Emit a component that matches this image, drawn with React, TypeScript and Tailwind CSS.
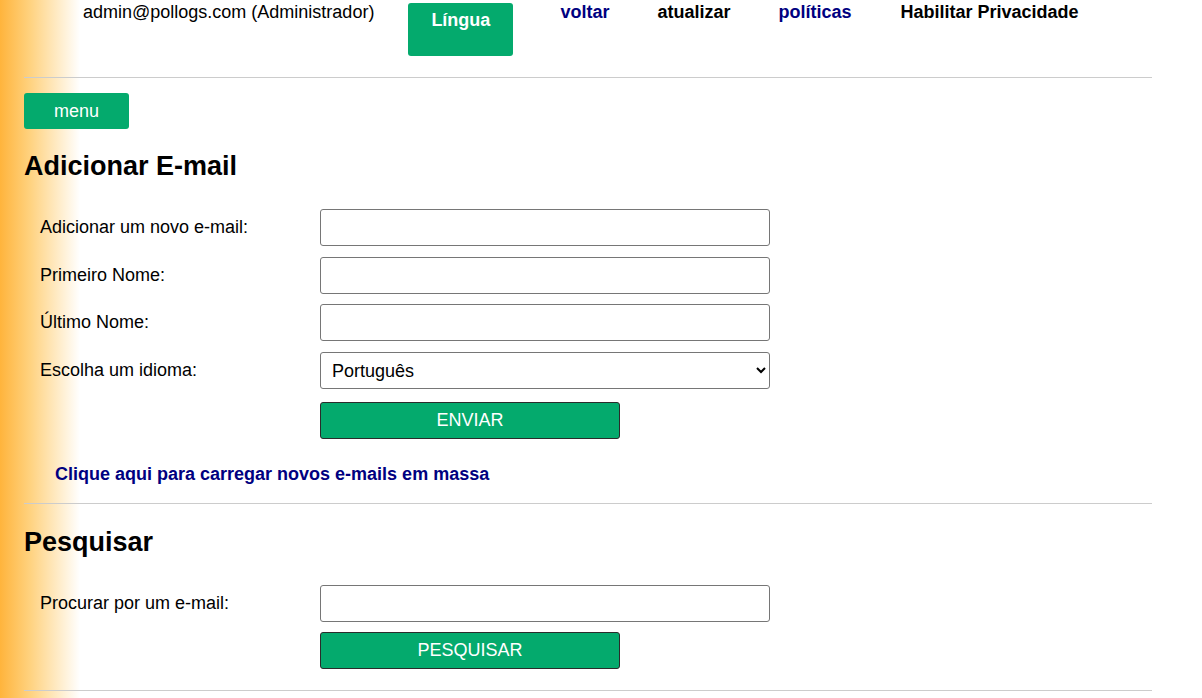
import React from 'react';

const navLinks = [
  { label: 'voltar', className: 'text-[#000080]', ml: 'ml-[47px]' },
  { label: 'atualizar', className: 'text-black', ml: 'ml-[48px]' },
  { label: 'políticas', className: 'text-[#000080]', ml: 'ml-[48px]' },
  { label: 'Habilitar Privacidade', className: 'text-black', ml: 'ml-[49px]' },
];

function Field({ label, children }: { label: string; children: React.ReactNode }) {
  return (
    <div className="flex items-center h-[37px]">
      <label className="w-[296px] shrink-0 pl-4">{label}</label>
      {children}
    </div>
  );
}

function TextInput() {
  return <input type="text" className="w-[450px] h-[37px] border border-[#767676] rounded-[3px] px-3 bg-white" />;
}

function SubmitButton({ label }: { label: string }) {
  return (
    <button className="ml-[296px] w-[300px] h-[37px] bg-[#04aa6d] text-white border border-[#2b2b2b] rounded-[3px] uppercase">
      {label}
    </button>
  );
}

export default function App() {
  return (
    <div className="min-h-screen bg-[linear-gradient(to_right,#ffb43c_0px,#ffd27f_30px,#ffffff_80px)] font-['Liberation_Sans',Arial,sans-serif] text-[18px] text-black">
      <div className="ml-6 w-[1128px]">
        {/* Header */}
        <div className="flex items-start h-[77px]">
          <span className="ml-[59px] leading-6 whitespace-nowrap">admin@pollogs.com (Administrador)</span>
          <button className="ml-[34px] mt-[3px] w-[105px] h-[53px] bg-[#04aa6d] rounded-[3px] text-white font-bold pt-[6px] leading-[22px] flex justify-center">
            Língua
          </button>
          {navLinks.map(({ label, className, ml }) => (
            <a key={label} href="#" className={`${ml} leading-6 font-bold whitespace-nowrap ${className}`}>
              {label}
            </a>
          ))}
        </div>
        <div className="border-t border-[#cccccc]" />

        <button className="mt-[15px] w-[105px] h-9 bg-[#04aa6d] rounded-[3px] text-white">menu</button>

        {/* Adicionar */}
        <h2 className="mt-[21px] text-[27px] leading-[32px] font-bold">Adicionar E-mail</h2>
        <div className="mt-[27px] flex flex-col">
          <Field label="Adicionar um novo e-mail:"><TextInput /></Field>
          <div className="mt-[11px]"><Field label="Primeiro Nome:"><TextInput /></Field></div>
          <div className="mt-[10px]"><Field label="Último Nome:"><TextInput /></Field></div>
          <div className="mt-[11px]">
            <Field label="Escolha um idioma:">
              <select className="w-[450px] h-[37px] border border-[#767676] rounded-[3px] pl-[7px] pr-2 bg-white">
                <option>Português</option>
                <option>English</option>
                <option>Español</option>
              </select>
            </Field>
          </div>
          <div className="mt-[13px]"><SubmitButton label="Enviar" /></div>
        </div>
        <a href="#" className="block mt-[24px] ml-[31px] font-bold text-[#000080] leading-[22px]">
          Clique aqui para carregar novos e-mails em massa
        </a>
        <div className="mt-[18px] border-t border-[#cccccc]" />

        {/* Pesquisar */}
        <h2 className="mt-[22px] text-[27px] leading-[32px] font-bold">Pesquisar</h2>
        <div className="mt-[27px] flex flex-col">
          <Field label="Procurar por um e-mail:"><TextInput /></Field>
          <div className="mt-[10px]"><SubmitButton label="Pesquisar" /></div>
        </div>
        <div className="mt-[21px] border-t border-[#cccccc]" />
      </div>
    </div>
  );
}
